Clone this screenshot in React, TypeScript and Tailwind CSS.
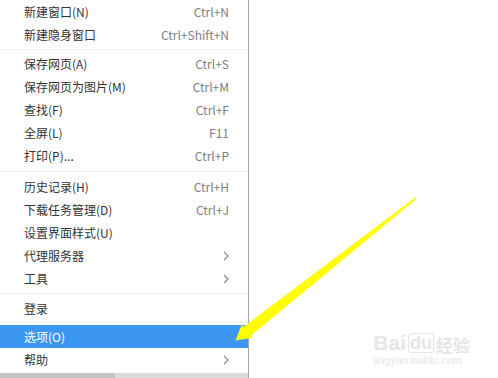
import React from "react";

type Item = { label: string; shortcut?: string; sub?: boolean; active?: boolean };

const font = { fontFamily: '"Noto Sans CJK SC", "Noto Sans", sans-serif' };

function Row({ item }: { item: Item }) {
  return (
    <div
      className={
        "flex h-[23px] items-center pl-[24px] pr-[19px] text-[12px] " +
        (item.active ? "bg-[#3c97f2] text-white" : "text-[#333333]")
      }
    >
      <span className="flex-1 whitespace-nowrap">{item.label}</span>
      {item.shortcut && <span className="text-[#808080] whitespace-nowrap">{item.shortcut}</span>}
      {item.sub && (
        <svg width="8" height="10" viewBox="0 0 8 10" className="mr-[-1px]">
          <path d="M2 1 L6 5 L2 9" fill="none" stroke="#8a8a8a" strokeWidth="1.2" />
        </svg>
      )}
    </div>
  );
}

function Sep({ h }: { h: string }) {
  return (
    <div className={"flex items-center " + h}>
      <div className="h-px w-full bg-[#ececec]" />
    </div>
  );
}

export default function App() {
  return (
    <div className="relative flex h-[378px] w-[498px] overflow-hidden bg-white" style={font}>
      <div className="flex w-[249px] flex-col border-r border-[#a6a6a6] bg-white">
        <Row item={{ label: "新建窗口(N)", shortcut: "Ctrl+N" }} />
        <Row item={{ label: "新建隐身窗口", shortcut: "Ctrl+Shift+N" }} />
        <Sep h="h-[6px]" />
        <Row item={{ label: "保存网页(A)", shortcut: "Ctrl+S" }} />
        <Row item={{ label: "保存网页为图片(M)", shortcut: "Ctrl+M" }} />
        <Row item={{ label: "查找(F)", shortcut: "Ctrl+F" }} />
        <Row item={{ label: "全屏(L)", shortcut: "F11" }} />
        <Row item={{ label: "打印(P)...", shortcut: "Ctrl+P" }} />
        <Sep h="h-[8px]" />
        <Row item={{ label: "历史记录(H)", shortcut: "Ctrl+H" }} />
        <Row item={{ label: "下载任务管理(D)", shortcut: "Ctrl+J" }} />
        <Row item={{ label: "设置界面样式(U)" }} />
        <Row item={{ label: "代理服务器", sub: true }} />
        <Row item={{ label: "工具", sub: true }} />
        <Sep h="h-[7px]" />
        <Row item={{ label: "登录" }} />
        <Sep h="h-[5px]" />
        <Row item={{ label: "选项(O)", active: true }} />
        <Row item={{ label: "帮助", sub: true }} />
        <div className="mt-auto flex h-[5px]">
          <div className="w-[115px] bg-[#c4c4c4]" />
          <div className="flex-1 bg-[#dcdcdc]" />
        </div>
      </div>
      <div className="flex flex-1 items-end justify-end pb-[12px] pr-[28px]">
        <div className="flex flex-col items-start text-[#e6e6e6]">
          <div className="flex items-end text-[21px] font-bold leading-none" style={{ fontFamily: '"Liberation Sans", sans-serif' }}>
            <span>Bai</span>
            <span className="relative ml-[2px] rounded-[3px] border border-[#e6e6e6] px-[1px] text-[18px]">du</span>
            <span className="ml-[2px] text-[17px]" style={font}>经验</span>
          </div>
          <div className="mt-[2px] text-[11px] leading-none" style={{ fontFamily: '"Liberation Sans", sans-serif' }}>jingyan.baidu.com</div>
        </div>
      </div>
      <svg className="pointer-events-none absolute left-0 top-0" width="498" height="378" viewBox="0 0 498 378">
        <polygon
          points="415.5,197.3 416.6,198.7 251,335.5 252.5,337.8 235.5,340.5 241.5,325 244,326.5"
          fill="#ffff00"
        />
      </svg>
    </div>
  );
}
